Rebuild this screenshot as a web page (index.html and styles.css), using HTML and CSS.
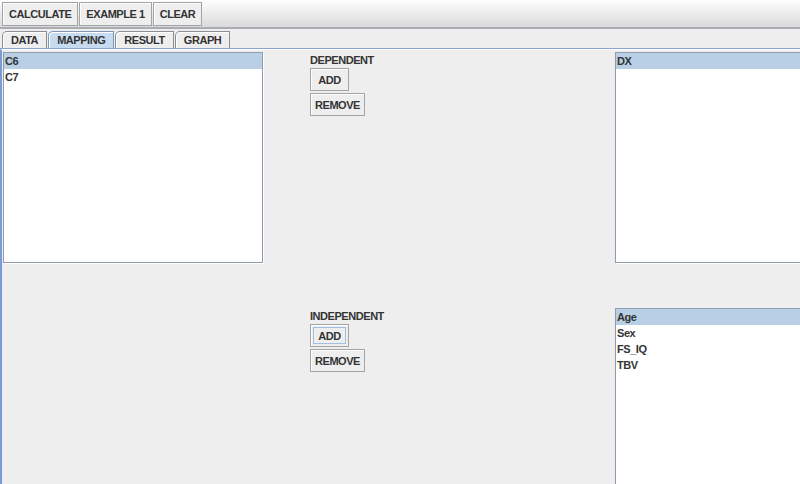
FILE: index.html
```
<!DOCTYPE html>
<html lang="en">
<head>
  <meta charset="UTF-8">
  <title>Mapping</title>
  <link rel="stylesheet" href="styles.css">
</head>
<body>
  <div class="toolbar">
    <button class="btn">CALCULATE</button>
    <button class="btn">EXAMPLE 1</button>
    <button class="btn">CLEAR</button>
  </div>

  <div class="tabs">
    <div class="tab">DATA</div>
    <div class="tab active">MAPPING</div>
    <div class="tab">RESULT</div>
    <div class="tab">GRAPH</div>
  </div>

  <div class="pane">
    <div class="mapping">
      <!-- variables -->
      <ul class="list">
        <li class="sel">C6</li>
        <li>C7</li>
      </ul>

      <div class="actions">
        <div class="label">DEPENDENT</div>
        <button class="btn small add">ADD</button>
        <button class="btn small">REMOVE</button>
      </div>

      <ul class="list clip">
        <li class="sel">DX</li>
      </ul>

      <div></div>

      <div class="actions">
        <div class="label">INDEPENDENT</div>
        <button class="btn small add focus">ADD</button>
        <button class="btn small">REMOVE</button>
      </div>

      <ul class="list clip tall">
        <li class="sel">Age</li>
        <li>Sex</li>
        <li>FS_IQ</li>
        <li>TBV</li>
      </ul>
    </div>
  </div>
</body>
</html>
```

FILE: styles.css
```
html, body {
  overflow: hidden;
}
body {
  margin: 0;
  height: 484px;
  background: #eeeeee;
  font-family: 'Liberation Sans', Arial, sans-serif;
  font-size: 11px;
  font-weight: bold;
  letter-spacing: -0.45px;
  color: #333333;
}
.toolbar {
  height: 29px;
  padding: 2px 0 0 2px;
  box-sizing: border-box;
  display: flex;
  align-items: flex-start;
  gap: 1px;
  background: linear-gradient(#fefefe, #dadada);
  border-bottom: 2px solid #a9adb1;
}
.btn {
  font: inherit;
  letter-spacing: inherit;
  color: #333333;
  background: #eeeeee;
  border: 1px solid #a3a3a3;
  box-shadow: inset 1px 1px 0 #ffffff;
  padding: 0 6px;
  height: 24px;
  cursor: pointer;
}
.tabs {
  display: flex;
  padding: 2px 0 0 2px;
  height: 17px;
  border-bottom: 1px solid #8aa4cf;
}
.tab {
  height: 17px;
  box-sizing: border-box;
  padding: 2px 8px 0 8px;
  border: 1px solid #8c8f92;
  border-bottom: none;
  border-top-left-radius: 5px 5px;
  margin-right: 1px;
  background: #eeeeee;
  box-shadow: inset 1px 1px 0 #ffffff;
}
.tab.active {
  background: #c6dbf0;
  border-color: #7f95b4;
}
.pane {
  box-sizing: border-box;
  height: 435px;
  overflow: hidden;
  border-left: 2px solid #7b9bd2;
  border-top: 1px solid #ffffff;
  padding: 2px 0 0 1px;
}
.mapping {
  display: grid;
  grid-template-columns: 260px 258px 185px;
  grid-template-rows: 211px 176px;
  column-gap: 47px;
  row-gap: 45px;
}
.list {
  list-style: none;
  margin: 0;
  padding: 0;
  background: #ffffff;
  border: 1px solid #8e9cae;
  box-shadow: 1px 1px 0 #ffffff;
}
.list.clip {
  border-right: none;
}
.list.tall {
  border-bottom: none;
}
.list li {
  height: 16px;
  line-height: 16px;
  padding-left: 1px;
}
.list li.sel {
  background: #b8cfe5;
}
.actions {
  display: flex;
  flex-direction: column;
  align-items: flex-start;
  gap: 2px;
  padding-top: 3px;
}
.label {
  height: 11px;
  line-height: 11px;
}
.btn.small {
  height: 23px;
  padding: 0 4px;
}
.btn.add {
  width: 39px;
}
.btn.focus {
  outline: 1px solid #a3bde3;
  outline-offset: -4px;
}
```
